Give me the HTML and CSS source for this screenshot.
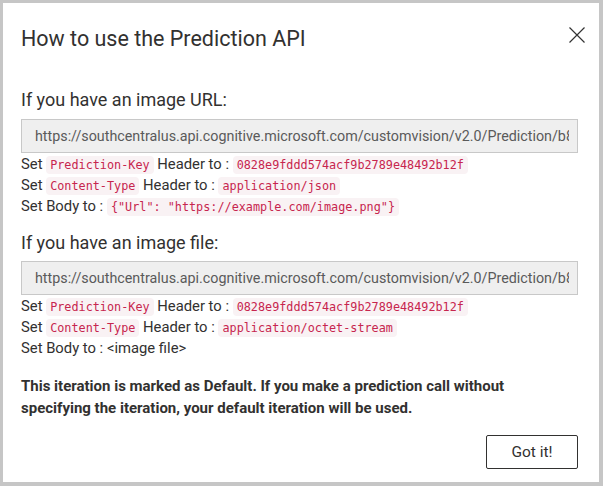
FILE: index.html
```html
<!DOCTYPE html>
<html>
<head>
<meta charset="utf-8">
<link rel="stylesheet" href="styles.css">
</head>
<body>
<div class="dialog">
  <div class="header">
    <h1 class="title">How to use the Prediction API</h1>
    <button class="close" aria-label="Close">
      <svg width="16" height="16" viewBox="0 0 16 16"><path d="M0.5 0.5 L15.5 15.5 M15.5 0.5 L0.5 15.5" stroke="#333" stroke-width="1.2" fill="none"/></svg>
    </button>
  </div>
  <div class="body">
    <h2 class="section-title">If you have an image URL:</h2>
    <div class="urlbox"><div class="urltext">https://southcentralus.api.cognitive.microsoft.com/customvision/v2.0/Prediction/b8c4a1f2-3d5e-4f60-9a7b-8c9d0e1f2a3b/url</div></div>
    <div class="row">Set <code>Prediction-Key</code> Header to : <code>0828e9fddd574acf9b2789e48492b12f</code></div>
    <div class="row">Set <code>Content-Type</code> Header to : <code>application/json</code></div>
    <div class="row">Set Body to : <code>{"Url": "https://example.com/image.png"}</code></div>

    <h2 class="section-title second">If you have an image file:</h2>
    <div class="urlbox"><div class="urltext">https://southcentralus.api.cognitive.microsoft.com/customvision/v2.0/Prediction/b8c4a1f2-3d5e-4f60-9a7b-8c9d0e1f2a3b/image</div></div>
    <div class="row">Set <code>Prediction-Key</code> Header to : <code>0828e9fddd574acf9b2789e48492b12f</code></div>
    <div class="row">Set <code>Content-Type</code> Header to : <code>application/octet-stream</code></div>
    <div class="row">Set Body to : &lt;image file&gt;</div>

    <p class="note">This iteration is marked as Default. If you make a prediction call without specifying the iteration, your default iteration will be used.</p>
  </div>
  <div class="footer">
    <button class="btn">Got it!</button>
  </div>
</div>
</body>
</html>
```
FILE: styles.css
```css
html, body {
  margin: 0;
  padding: 0;
  background: #ffffff;
}
body {
  font-family: Roboto, "Liberation Sans", sans-serif;
  color: #323130;
}
.dialog {
  box-sizing: border-box;
  width: 603px;
  height: 486px;
  border-style: solid;
  border-color: #c6c6c6;
  border-width: 3px 4px 4px 3px;
  background: #fff;
  display: flex;
  flex-direction: column;
  padding: 0 21px 0 18px;
}
.header {
  display: flex;
  align-items: flex-start;
  justify-content: space-between;
  padding-top: 21px;
}
.title {
  margin: 0;
  font-size: 21.5px;
  font-weight: 400;
  line-height: 30px;
  color: #323130;
}
.close {
  border: 0;
  background: none;
  padding: 0;
  margin: 3px -7px 0 0;
  width: 16px;
  height: 16px;
  display: flex;
}
.body {
  flex: 1;
}
.section-title {
  margin: 34px 0 0 0;
  font-size: 18px;
  font-weight: 400;
  line-height: 24px;
  color: #323130;
}
.section-title.second {
  margin-top: 14px;
}
.urlbox {
  margin-top: 7px;
  box-sizing: border-box;
  height: 34px;
  border: 1px solid #c8c8c8;
  background: #efefef;
  padding: 0 8px 0 13px;
}
.urltext {
  line-height: 32px;
  font-size: 14.3px;
  color: #5a5a5a;
  white-space: nowrap;
  overflow: hidden;
}
.second + .urlbox {
  margin-top: 6px;
}
.urlbox + .row {
  margin-top: 1px;
}
.row {
  font-size: 14.8px;
  line-height: 21px;
  height: 21px;
  color: #323130;
  white-space: nowrap;
}
code {
  font-family: "DejaVu Sans Mono", "Liberation Mono", monospace;
  font-size: 11.8px;
  line-height: 14px;
  color: #c7254e;
  background: #f9f2f4;
  border-radius: 4px;
  padding: 2px 4px;
}
.note {
  margin: 16px 0 0 0;
  max-width: 530px;
  font-size: 15px;
  font-weight: 700;
  line-height: 22px;
  color: #323130;
}
.footer {
  display: flex;
  justify-content: flex-end;
  padding-bottom: 13px;
}
.btn {
  font-family: Roboto, "Liberation Sans", sans-serif;
  font-size: 15.5px;
  color: #323130;
  background: #fff;
  border: 1px solid #323130;
  border-radius: 2px;
  width: 92px;
  height: 34px;
  padding: 0;
}
```
